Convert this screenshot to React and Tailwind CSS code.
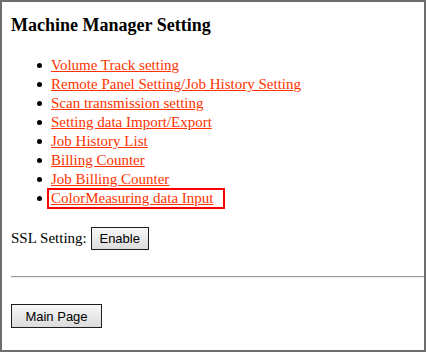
const LINKS = [
  'Volume Track setting',
  'Remote Panel Setting/Job History Setting',
  'Scan transmission setting',
  'Setting data Import/Export',
  'Job History List',
  'Billing Counter',
  'Job Billing Counter',
];

const SERIF = { fontFamily: '"Liberation Serif", "Times New Roman", serif' };

function Btn({ children, className }) {
  return (
    <button
      className={`flex items-center justify-center border border-[#1e1e1e] bg-gradient-to-b from-[#f7f7f7] to-[#dcdcdc] font-['Liberation_Sans',Arial,sans-serif] text-[13px] leading-none text-black ${className}`}
    >
      {children}
    </button>
  );
}

export default function App() {
  return (
    <div className="h-[352px] w-[426px] overflow-hidden border-2 border-[#6e6e6e] bg-white pt-[13px] pl-[9px] text-black" style={SERIF}>
      <h3 className="text-[18px] font-bold leading-[21px]">Machine Manager Setting</h3>

      <ul className="mt-[20px]">
        {LINKS.map(t => (
          <li key={t} className="flex h-[19px] items-center text-[15px] leading-[19px]">
            <span className="ml-[26px] mr-[9px] h-[5px] w-[5px] rounded-full bg-black" />
            <a href="#" className="text-[#ff3300] underline decoration-[#ff3300]">{t}</a>
          </li>
        ))}
        <li className="flex h-[19px] items-center text-[15px] leading-[19px]">
          <span className="ml-[26px] mr-[9px] h-[5px] w-[5px] rounded-full bg-black" />
          <span className="-ml-[4px] border-2 border-[#ff0000] pl-[2px] pr-[10px] leading-[17px]">
            <a href="#" className="text-[#ff3300] underline decoration-[#ff3300]">ColorMeasuring data Input</a>
          </span>
        </li>
      </ul>

      <div className="mt-[19px] flex items-center text-[15px] leading-[19px]">
        <span>SSL Setting:</span>
        <Btn className="ml-[4px] h-[23px] w-[58px]">Enable</Btn>
      </div>

      <hr className="mt-[26px] border-t border-b border-t-[#9a9a9a] border-b-[#ececec]" />

      <Btn className="mt-[26px] h-[24px] w-[91px]">Main Page</Btn>
    </div>
  );
}
